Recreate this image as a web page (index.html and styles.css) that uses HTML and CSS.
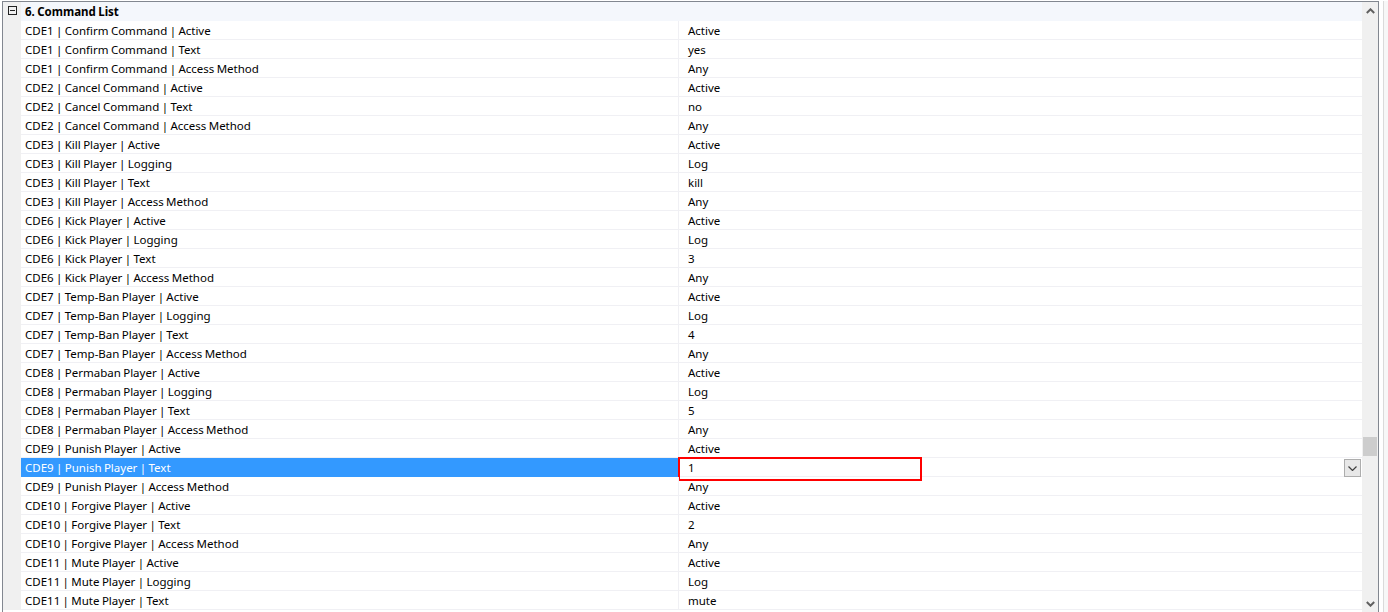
FILE: index.html
```html
<!DOCTYPE html>
<html lang="en">
<head>
    <meta charset="UTF-8">
    <title>Command List</title>
    <link rel="stylesheet" href="styles.css">
</head>
<body>
    <div class="page">
        <div class="frame">
            <div class="grid">
                <!-- category header -->
                <div class="row head">
                    <div class="gutter"><span class="minus"></span></div>
                    <div class="label">6. Command List</div>
                    <div class="value"></div>
                </div>
                <div class="row"><div class="gutter"></div><div class="label">CDE1 | Confirm Command | Active</div><div class="value">Active</div></div>
                <div class="row"><div class="gutter"></div><div class="label">CDE1 | Confirm Command | Text</div><div class="value">yes</div></div>
                <div class="row"><div class="gutter"></div><div class="label">CDE1 | Confirm Command | Access Method</div><div class="value">Any</div></div>
                <div class="row"><div class="gutter"></div><div class="label">CDE2 | Cancel Command | Active</div><div class="value">Active</div></div>
                <div class="row"><div class="gutter"></div><div class="label">CDE2 | Cancel Command | Text</div><div class="value">no</div></div>
                <div class="row"><div class="gutter"></div><div class="label">CDE2 | Cancel Command | Access Method</div><div class="value">Any</div></div>
                <div class="row"><div class="gutter"></div><div class="label">CDE3 | Kill Player | Active</div><div class="value">Active</div></div>
                <div class="row"><div class="gutter"></div><div class="label">CDE3 | Kill Player | Logging</div><div class="value">Log</div></div>
                <div class="row"><div class="gutter"></div><div class="label">CDE3 | Kill Player | Text</div><div class="value">kill</div></div>
                <div class="row"><div class="gutter"></div><div class="label">CDE3 | Kill Player | Access Method</div><div class="value">Any</div></div>
                <div class="row"><div class="gutter"></div><div class="label">CDE6 | Kick Player | Active</div><div class="value">Active</div></div>
                <div class="row"><div class="gutter"></div><div class="label">CDE6 | Kick Player | Logging</div><div class="value">Log</div></div>
                <div class="row"><div class="gutter"></div><div class="label">CDE6 | Kick Player | Text</div><div class="value">3</div></div>
                <div class="row"><div class="gutter"></div><div class="label">CDE6 | Kick Player | Access Method</div><div class="value">Any</div></div>
                <div class="row"><div class="gutter"></div><div class="label">CDE7 | Temp-Ban Player | Active</div><div class="value">Active</div></div>
                <div class="row"><div class="gutter"></div><div class="label">CDE7 | Temp-Ban Player | Logging</div><div class="value">Log</div></div>
                <div class="row"><div class="gutter"></div><div class="label">CDE7 | Temp-Ban Player | Text</div><div class="value">4</div></div>
                <div class="row"><div class="gutter"></div><div class="label">CDE7 | Temp-Ban Player | Access Method</div><div class="value">Any</div></div>
                <div class="row"><div class="gutter"></div><div class="label">CDE8 | Permaban Player | Active</div><div class="value">Active</div></div>
                <div class="row"><div class="gutter"></div><div class="label">CDE8 | Permaban Player | Logging</div><div class="value">Log</div></div>
                <div class="row"><div class="gutter"></div><div class="label">CDE8 | Permaban Player | Text</div><div class="value">5</div></div>
                <div class="row"><div class="gutter"></div><div class="label">CDE8 | Permaban Player | Access Method</div><div class="value">Any</div></div>
                <div class="row"><div class="gutter"></div><div class="label">CDE9 | Punish Player | Active</div><div class="value">Active</div></div>
                <!-- selected row, value being edited -->
                <div class="row selected">
                    <div class="gutter"></div>
                    <div class="label">CDE9 | Punish Player | Text</div>
                    <div class="value">1
                        <span class="highlight"></span>
                        <span class="dropdown">
                            <svg width="9" height="5" viewBox="0 0 9 5"><path d="M0.5 0.5 L4.5 4.5 L8.5 0.5" fill="none" stroke="#404040" stroke-width="1.2"/></svg>
                        </span>
                    </div>
                </div>
                <div class="row"><div class="gutter"></div><div class="label">CDE9 | Punish Player | Access Method</div><div class="value">Any</div></div>
                <div class="row"><div class="gutter"></div><div class="label">CDE10 | Forgive Player | Active</div><div class="value">Active</div></div>
                <div class="row"><div class="gutter"></div><div class="label">CDE10 | Forgive Player | Text</div><div class="value">2</div></div>
                <div class="row"><div class="gutter"></div><div class="label">CDE10 | Forgive Player | Access Method</div><div class="value">Any</div></div>
                <div class="row"><div class="gutter"></div><div class="label">CDE11 | Mute Player | Active</div><div class="value">Active</div></div>
                <div class="row"><div class="gutter"></div><div class="label">CDE11 | Mute Player | Logging</div><div class="value">Log</div></div>
                <div class="row"><div class="gutter"></div><div class="label">CDE11 | Mute Player | Text</div><div class="value">mute</div></div>
            </div>
            <!-- vertical scrollbar -->
            <div class="scrollbar">
                <div class="arrow">
                    <svg width="9" height="6" viewBox="0 0 9 6"><path d="M0.8 5 L4.5 1.3 L8.2 5" fill="none" stroke="#606060" stroke-width="2"/></svg>
                </div>
                <div class="track"><div class="thumb"></div></div>
                <div class="arrow">
                    <svg width="9" height="6" viewBox="0 0 9 6"><path d="M0.8 1 L4.5 4.7 L8.2 1" fill="none" stroke="#606060" stroke-width="2"/></svg>
                </div>
            </div>
        </div>
        <div class="side"></div>
    </div>
</body>
</html>
```

FILE: styles.css
```css
body {
    margin: 0;
    background-color: #fff;
    font-family: "Segoe UI", "Noto Sans", sans-serif;
    font-size: 11.5px;
    word-spacing: -0.6px;
    color: #000;
    overflow: hidden;
}

.page {
    display: flex;
    height: 612px;
    padding-top: 1px;
    box-sizing: border-box;
}

.frame {
    display: flex;
    flex-shrink: 0;
    margin-left: 2px;
    width: 1377px;
    border: 1px solid #828790;
    border-bottom: none;
    box-sizing: border-box;
    overflow: hidden;
}

.grid {
    flex: 1;
    display: flex;
    flex-direction: column;
}

.row {
    display: flex;
    height: 19px;
    flex-shrink: 0;
}

.gutter {
    width: 18px;
    background-color: #f0f0f0;
    position: relative;
}

.label {
    width: 657px;
    height: 19px;
    padding: 1px 0 0 4px;
    box-sizing: border-box;
    line-height: 18px;
    border-bottom: 1px solid #f0f0f4;
    white-space: nowrap;
}

.value {
    flex: 1;
    position: relative;
    height: 19px;
    padding: 1px 0 0 9px;
    box-sizing: border-box;
    line-height: 18px;
    border-left: 1px solid #f0f0f4;
    border-bottom: 1px solid #f0f0f4;
}

.head .label,
.head .value {
    background-color: #f4f7fc;
    font-weight: bold;
    border-color: #f4f7fc;
}

.minus {
    position: absolute;
    left: 5px;
    top: 4px;
    width: 9px;
    height: 9px;
    border: 1px solid #222;
    box-sizing: border-box;
}

.minus::after {
    content: "";
    position: absolute;
    left: 1px;
    right: 1px;
    top: 3px;
    height: 1px;
    background-color: #222;
}

.selected .label {
    background-color: #3399ff;
    color: #fff;
    border-color: #3399ff;
}

.selected .value {
    background-color: #fff;
}

/* red marker around the edited value */
.highlight {
    position: absolute;
    left: -1px;
    top: -1px;
    width: 244px;
    height: 24px;
    border: 2px solid #ff0000;
    box-sizing: border-box;
}

.dropdown {
    position: absolute;
    right: 1px;
    top: 1px;
    width: 17px;
    height: 18px;
    background-color: #e8e8e8;
    border: 1px solid #adadad;
    box-sizing: border-box;
    display: flex;
    align-items: center;
    justify-content: center;
}

.scrollbar {
    width: 16px;
    background-color: #f0f0f0;
    display: flex;
    flex-direction: column;
}

.arrow {
    height: 17px;
    display: flex;
    align-items: center;
    justify-content: center;
}

.track {
    flex: 1;
    position: relative;
}

.thumb {
    position: absolute;
    left: 1px;
    right: 1px;
    top: 418px;
    height: 19px;
    background-color: #cdcdcd;
}

.side {
    flex-shrink: 0;
    width: 4px;
    margin-left: 4px;
    border-left: 1px solid #dadada;
    background-color: #f7f7f7;
}
```
